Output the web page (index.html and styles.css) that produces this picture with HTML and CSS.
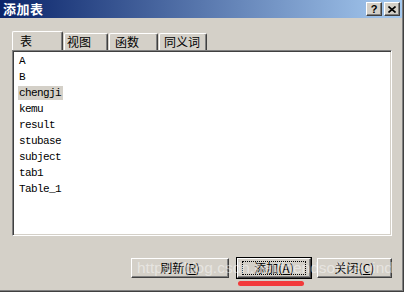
FILE: index.html
```html
<!DOCTYPE html>
<html>
<head>
<meta charset="utf-8">
<link rel="stylesheet" href="styles.css">
</head>
<body>
<div class="dialog">
  <div class="titlebar">
    <span class="title">添加表</span>
    <div class="tb-btns">
      <span class="tb-btn">?</span>
      <span class="tb-btn"><svg width="8" height="7" viewBox="0 0 8 7"><path d="M0.5 0.5 L7.5 6.5 M7.5 0.5 L0.5 6.5" stroke="#000" stroke-width="1.6" fill="none"/></svg></span>
    </div>
  </div>
  <div class="content">
    <div class="tabs">
      <div class="tab tab-active">表</div>
      <div class="tab tab-2">视图</div>
      <div class="tab tab-3">函数</div>
      <div class="tab tab-4">同义词</div>
    </div>
    <div class="list">
      <div class="item"><span>A</span></div>
      <div class="item"><span>B</span></div>
      <div class="item"><span class="sel">chengji</span></div>
      <div class="item"><span>kemu</span></div>
      <div class="item"><span>result</span></div>
      <div class="item"><span>stubase</span></div>
      <div class="item"><span>subject</span></div>
      <div class="item"><span>tab1</span></div>
      <div class="item"><span>Table_1</span></div>
    </div>
    <div class="buttons">
      <div class="btn btn-refresh">刷新(<u>R</u>)</div>
      <div class="btn-default"><div class="btn btn-add"><span class="focus">添加(<u>A</u>)</span></div></div>
      <div class="btn btn-close">关闭(<u>C</u>)</div>
    </div>
  </div>
  <div class="mark"></div>
  <div class="watermark">https://blog.csdn.net/friendsofthewind</div>
</div>
</body>
</html>
```
FILE: styles.css
```css
html, body {
  margin: 0;
  padding: 0;
  background: #d4d0c8;
}
.dialog {
  position: relative;
  width: 404px;
  height: 292px;
  box-sizing: border-box;
  background: #d4d0c8;
  border-right: 1px solid #404040;
  border-bottom: 1px solid #404040;
  box-shadow: inset -1px -1px 0 #808080;
  font-family: "Noto Sans CJK SC", "Liberation Sans", sans-serif;
  font-size: 12px;
  color: #000;
  overflow: hidden;
}
.titlebar {
  height: 18px;
  width: 402px;
  display: flex;
  align-items: center;
  justify-content: space-between;
  background: linear-gradient(to right, #0a246a, #a6caf0);
  padding-left: 3px;
  box-sizing: border-box;
}
.title {
  color: #fff;
  font-weight: bold;
  font-size: 13px;
  line-height: 18px;
  letter-spacing: 0.5px;
}
.tb-btns {
  display: flex;
  gap: 2px;
  margin-right: 2px;
}
.tb-btn {
  width: 16px;
  height: 14px;
  box-sizing: border-box;
  background: #d4d0c8;
  border-top: 1px solid #fff;
  border-left: 1px solid #fff;
  border-right: 1px solid #404040;
  border-bottom: 1px solid #404040;
  box-shadow: inset -1px -1px 0 #808080;
  display: flex;
  align-items: center;
  justify-content: center;
  font-family: "Liberation Sans", sans-serif;
  font-weight: bold;
  font-size: 11px;
  line-height: 12px;
}
.content {
  padding-left: 12px;
}
.tabs {
  display: flex;
  align-items: flex-end;
  margin-top: 13px;
  height: 19px;
}
.tab {
  box-sizing: border-box;
  height: 17px;
  border-top: 1px solid #fff;
  border-left: 1px solid #fff;
  border-right: 1px solid #404040;
  box-shadow: inset -1px 0 0 #808080;
  border-radius: 2px 2px 0 0;
  padding-left: 4px;
  line-height: 16px;
  font-size: 12px;
}
.tab-active {
  width: 51px;
  height: 19px;
  padding-left: 7px;
  line-height: 18px;
}
.tab-2 {
  width: 44px;
  margin-left: 1px;
  padding-left: 2px;
}
.tab-3 {
  width: 49px;
  margin-left: 1px;
  padding-left: 5px;
}
.tab-4 {
  width: 48px;
  margin-left: 1px;
}
.list {
  width: 380px;
  height: 186px;
  box-sizing: border-box;
  background: #fff;
  border-top: 1px solid #808080;
  border-left: 1px solid #808080;
  border-right: 1px solid #fff;
  border-bottom: 1px solid #fff;
  box-shadow: inset 1px 1px 0 #404040, inset -1px -1px 0 #d4d0c8;
  padding: 3px 0 0 5px;
}
.item {
  height: 14px;
  margin-bottom: 2px;
  font-family: "Liberation Mono", monospace;
  font-size: 11px;
  letter-spacing: -0.6px;
  line-height: 14px;
}
.item span {
  display: inline-block;
  padding: 0 2px 0 1px;
  height: 14px;
}
.item .sel {
  background: #d4d0c8;
}
.buttons {
  display: flex;
  align-items: center;
  justify-content: flex-end;
  margin-top: 21px;
  padding-right: 11px;
  height: 22px;
}
.btn {
  box-sizing: border-box;
  height: 20px;
  background: #d4d0c8;
  border-top: 1px solid #fff;
  border-left: 1px solid #fff;
  border-right: 1px solid #404040;
  border-bottom: 1px solid #404040;
  box-shadow: inset -1px -1px 0 #808080;
  display: flex;
  align-items: center;
  justify-content: center;
  font-size: 12px;
  line-height: 14px;
}
.btn u {
  text-decoration: underline;
}
.btn-refresh {
  width: 98px;
}
.btn-default {
  margin-left: 7px;
  border: 1px solid #000;
}
.btn-add {
  width: 74px;
  height: 20px;
}
.focus {
  box-sizing: border-box;
  width: 64px;
  height: 14px;
  border: 1px dotted #000;
  text-align: center;
  line-height: 12px;
}
.btn-close {
  width: 75px;
  margin-left: 5px;
}
.mark {
  position: absolute;
  left: 238px;
  top: 281px;
  width: 66px;
  height: 5px;
  border-radius: 3px;
  background: #f23a3a;
}
.watermark {
  position: absolute;
  left: 137px;
  top: 259px;
  font-family: "Liberation Sans", sans-serif;
  font-size: 15.5px;
  color: rgba(255, 255, 255, 0.45);
  white-space: nowrap;
}
```
